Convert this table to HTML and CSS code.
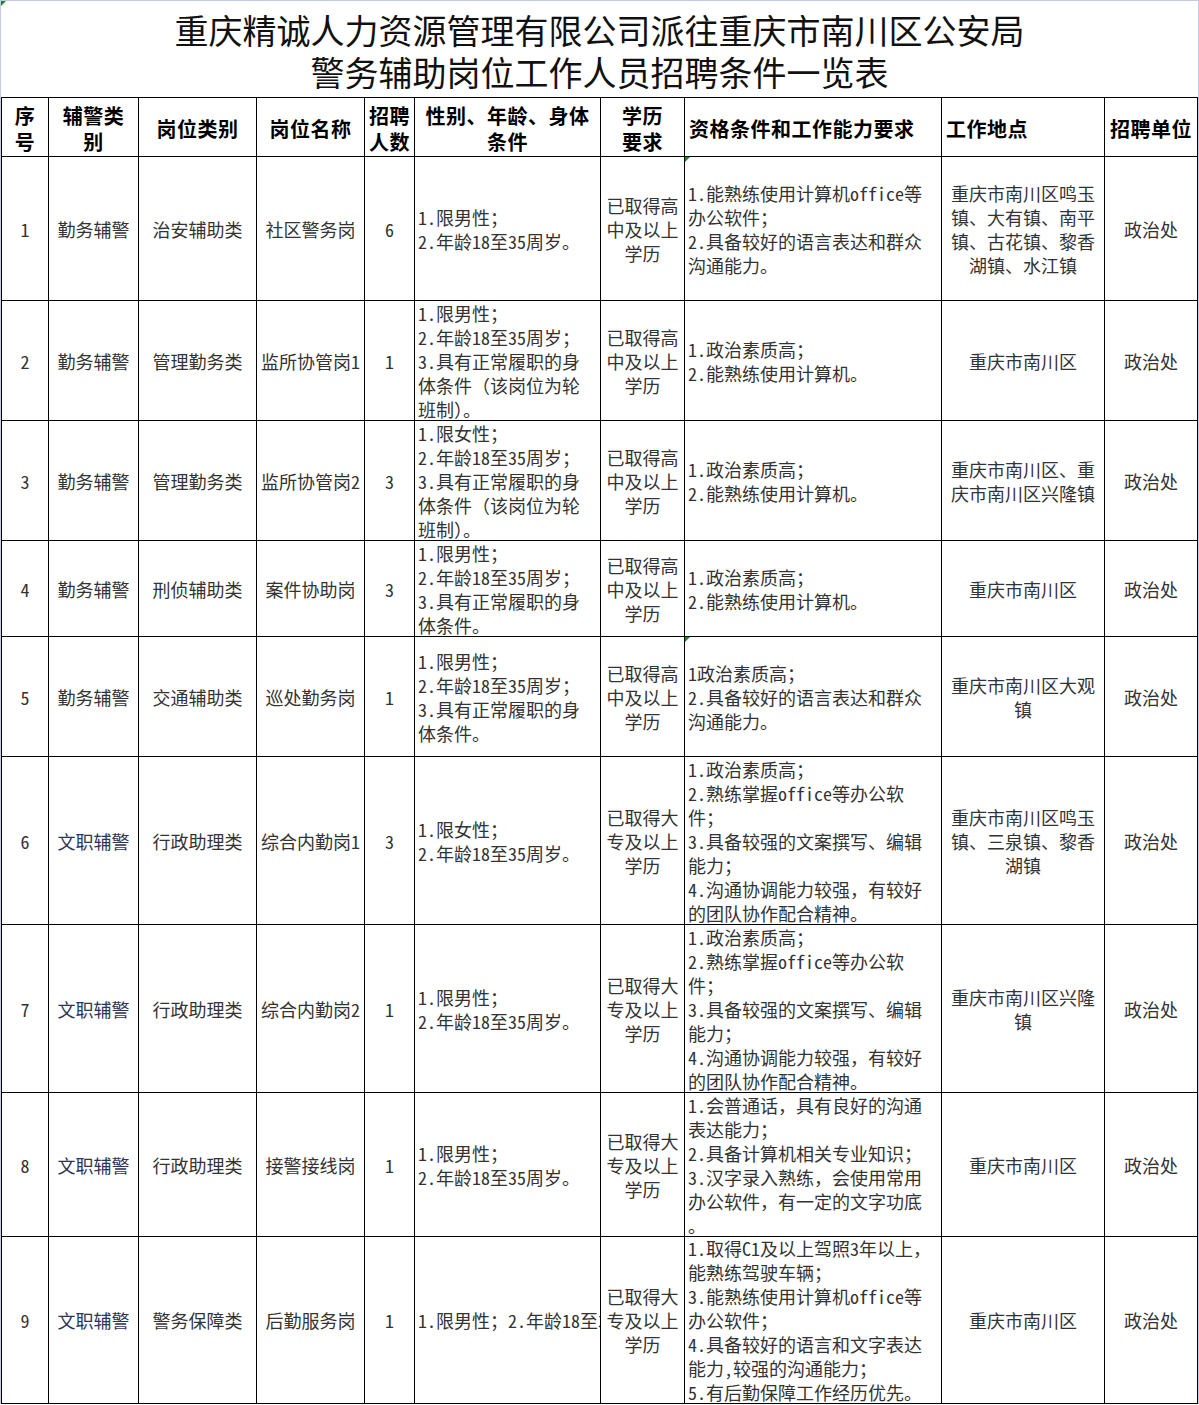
FILE: index.html
```html
<!DOCTYPE html>
<html lang="zh-CN">
<head>
<meta charset="utf-8">
<title>警务辅助岗位工作人员招聘条件一览表</title>
<link rel="stylesheet" href="styles.css">
</head>
<body>
<div class="frame">
  <div class="title">
    <span class="mark"></span>
    <div class="title-line">重庆精诚人力资源管理有限公司派往重庆市南川区公安局</div>
    <div class="title-line">警务辅助岗位工作人员招聘条件一览表</div>
  </div>
  <div class="sheet">
    <div class="h c">序<br>号</div>
    <div class="h c">辅警类<br>别</div>
    <div class="h c">岗位类别</div>
    <div class="h c">岗位名称</div>
    <div class="h c">招聘<br>人数</div>
    <div class="h c">性别、年龄、身体<br>条件</div>
    <div class="h c">学历<br>要求</div>
    <div class="h l">资格条件和工作能力要求</div>
    <div class="h l">工作地点</div>
    <div class="h c">招聘单位</div>

    <div class="d c">1</div>
    <div class="d c">勤务辅警</div>
    <div class="d c">治安辅助类</div>
    <div class="d c">社区警务岗</div>
    <div class="d c">6</div>
    <div class="d l">1.限男性；<br>2.年龄18至35周岁。</div>
    <div class="d c">已取得高<br>中及以上<br>学历</div>
    <div class="d l"><span class="mark"></span>1.能熟练使用计算机office等<br>办公软件；<br>2.具备较好的语言表达和群众<br>沟通能力。</div>
    <div class="d c">重庆市南川区鸣玉<br>镇、大有镇、南平<br>镇、古花镇、黎香<br>湖镇、水江镇</div>
    <div class="d c">政治处</div>

    <div class="d c">2</div>
    <div class="d c">勤务辅警</div>
    <div class="d c">管理勤务类</div>
    <div class="d c">监所协管岗1</div>
    <div class="d c">1</div>
    <div class="d l">1.限男性；<br>2.年龄18至35周岁；<br>3.具有正常履职的身<br>体条件（该岗位为轮<br>班制）。</div>
    <div class="d c">已取得高<br>中及以上<br>学历</div>
    <div class="d l">1.政治素质高；<br>2.能熟练使用计算机。</div>
    <div class="d c">重庆市南川区</div>
    <div class="d c">政治处</div>

    <div class="d c">3</div>
    <div class="d c">勤务辅警</div>
    <div class="d c">管理勤务类</div>
    <div class="d c">监所协管岗2</div>
    <div class="d c">3</div>
    <div class="d l">1.限女性；<br>2.年龄18至35周岁；<br>3.具有正常履职的身<br>体条件（该岗位为轮<br>班制）。</div>
    <div class="d c">已取得高<br>中及以上<br>学历</div>
    <div class="d l">1.政治素质高；<br>2.能熟练使用计算机。</div>
    <div class="d c">重庆市南川区、重<br>庆市南川区兴隆镇</div>
    <div class="d c">政治处</div>

    <div class="d c">4</div>
    <div class="d c">勤务辅警</div>
    <div class="d c">刑侦辅助类</div>
    <div class="d c">案件协助岗</div>
    <div class="d c">3</div>
    <div class="d l">1.限男性；<br>2.年龄18至35周岁；<br>3.具有正常履职的身<br>体条件。</div>
    <div class="d c">已取得高<br>中及以上<br>学历</div>
    <div class="d l">1.政治素质高；<br>2.能熟练使用计算机。</div>
    <div class="d c">重庆市南川区</div>
    <div class="d c">政治处</div>

    <div class="d c">5</div>
    <div class="d c">勤务辅警</div>
    <div class="d c">交通辅助类</div>
    <div class="d c">巡处勤务岗</div>
    <div class="d c">1</div>
    <div class="d l">1.限男性；<br>2.年龄18至35周岁；<br>3.具有正常履职的身<br>体条件。</div>
    <div class="d c">已取得高<br>中及以上<br>学历</div>
    <div class="d l"><span class="mark"></span>1政治素质高；<br>2.具备较好的语言表达和群众<br>沟通能力。</div>
    <div class="d c">重庆市南川区大观<br>镇</div>
    <div class="d c">政治处</div>

    <div class="d c">6</div>
    <div class="d c wz">文职辅警</div>
    <div class="d c">行政助理类</div>
    <div class="d c">综合内勤岗1</div>
    <div class="d c">3</div>
    <div class="d l">1.限女性；<br>2.年龄18至35周岁。</div>
    <div class="d c">已取得大<br>专及以上<br>学历</div>
    <div class="d l">1.政治素质高；<br>2.熟练掌握office等办公软<br>件；<br>3.具备较强的文案撰写、编辑<br>能力；<br>4.沟通协调能力较强，有较好<br>的团队协作配合精神。</div>
    <div class="d c">重庆市南川区鸣玉<br>镇、三泉镇、黎香<br>湖镇</div>
    <div class="d c">政治处</div>

    <div class="d c">7</div>
    <div class="d c wz">文职辅警</div>
    <div class="d c">行政助理类</div>
    <div class="d c">综合内勤岗2</div>
    <div class="d c">1</div>
    <div class="d l">1.限男性；<br>2.年龄18至35周岁。</div>
    <div class="d c">已取得大<br>专及以上<br>学历</div>
    <div class="d l">1.政治素质高；<br>2.熟练掌握office等办公软<br>件；<br>3.具备较强的文案撰写、编辑<br>能力；<br>4.沟通协调能力较强，有较好<br>的团队协作配合精神。</div>
    <div class="d c">重庆市南川区兴隆<br>镇</div>
    <div class="d c">政治处</div>

    <div class="d c">8</div>
    <div class="d c wz">文职辅警</div>
    <div class="d c">行政助理类</div>
    <div class="d c">接警接线岗</div>
    <div class="d c">1</div>
    <div class="d l">1.限男性；<br>2.年龄18至35周岁。</div>
    <div class="d c">已取得大<br>专及以上<br>学历</div>
    <div class="d l">1.会普通话，具有良好的沟通<br>表达能力；<br>2.具备计算机相关专业知识；<br>3.汉字录入熟练，会使用常用<br>办公软件，有一定的文字功底<br>。</div>
    <div class="d c">重庆市南川区</div>
    <div class="d c">政治处</div>

    <div class="d c">9</div>
    <div class="d c wz">文职辅警</div>
    <div class="d c">警务保障类</div>
    <div class="d c">后勤服务岗</div>
    <div class="d c">1</div>
    <div class="d l">1.限男性；2.年龄18至35周岁。</div>
    <div class="d c">已取得大<br>专及以上<br>学历</div>
    <div class="d l">1.取得C1及以上驾照3年以上，<br>能熟练驾驶车辆；<br>3.能熟练使用计算机office等<br>办公软件；<br>4.具备较好的语言和文字表达<br>能力,较强的沟通能力；<br>5.有后勤保障工作经历优先。</div>
    <div class="d c">重庆市南川区</div>
    <div class="d c">政治处</div>
  </div>
</div>
</body>
</html>
```

FILE: styles.css
```css
html, body {
  margin: 0;
  padding: 0;
  background: #ffffff;
}

body {
  font-family: "Noto Sans Mono CJK SC", "Noto Sans CJK SC", "DejaVu Sans", sans-serif;
  color: #333333;
}

.frame {
  width: 1199px;
  box-sizing: border-box;
  border-top: 1px solid #c6cbdf;
  border-left: 1px solid #c6cbdf;
  border-right: 1px solid #c6cbdf;
}

.title {
  position: relative;
  height: 96px;
  box-sizing: border-box;
  padding-top: 8px;
  text-align: center;
  font-family: "Noto Sans CJK SC", sans-serif;
  font-size: 34px;
  line-height: 42px;
  font-weight: 400;
  color: #111111;
  white-space: nowrap;
}

.mark {
  position: absolute;
  left: 0;
  top: 0;
  width: 0;
  height: 0;
  border-top: 5px solid #1e8a1e;
  border-right: 5px solid transparent;
}

.sheet {
  display: grid;
  grid-template-columns: 46px 89px 117px 107px 49px 185px 83px 256px 162px 92px;
  grid-template-rows: 58px 143px 119px 119px 95px 119px 167px 167px 143px 166px;
  gap: 1px;
  padding: 1px;
  width: 1197px;
  box-sizing: border-box;
  background: #000000;
}

.sheet > div {
  position: relative;
  background: #ffffff;
  display: flex;
  align-items: center;
  overflow: hidden;
  white-space: nowrap;
  box-sizing: border-box;
}

.c {
  justify-content: center;
  text-align: center;
}

.l {
  justify-content: flex-start;
  text-align: left;
  padding-left: 3px;
}

.h {
  font-family: "Noto Sans CJK SC", sans-serif;
  font-weight: 700;
  font-size: 20px;
  line-height: 26px;
  letter-spacing: 0.5px;
  color: #000000;
  padding-top: 4px;
}

.h.l {
  padding-left: 4px;
}

.d {
  font-size: 18px;
  line-height: 24px;
  color: #333333;
}

.wz {
  color: #2e3456;
}
```
